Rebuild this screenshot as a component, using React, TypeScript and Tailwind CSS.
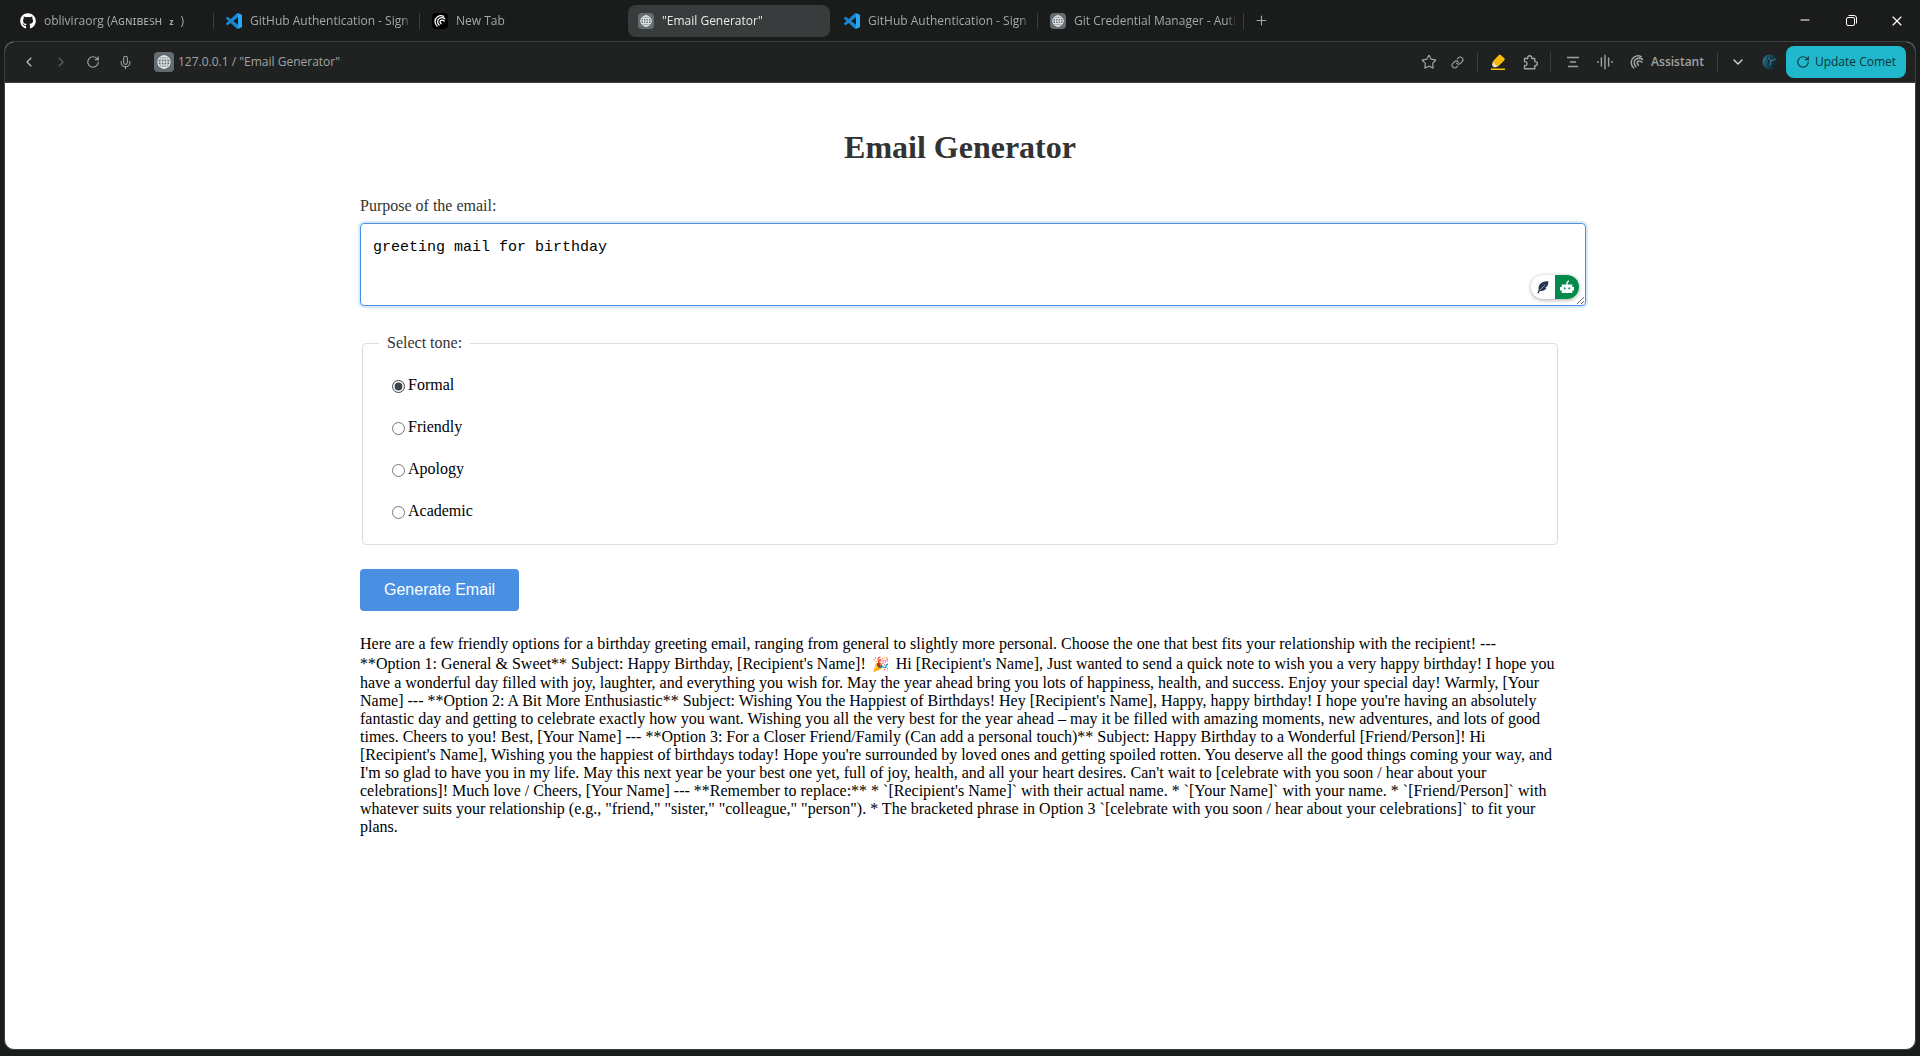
import { useState } from "react";
import type { ReactNode } from "react";
import {
  ChevronDown,
  ChevronLeft,
  ChevronRight,
  Link,
  Mic,
  Minus,
  Plus,
  RotateCw,
  Star,
  X,
} from "lucide-react";
import { FaGithub } from "react-icons/fa";

interface Tab {
  title: ReactNode;
  icon: ReactNode;
  active?: boolean;
  separator?: boolean;
}

const tones = ["Formal", "Friendly", "Apology", "Academic"];

function VsCodeIcon() {
  return (
    <svg viewBox="0 0 24 24" className="size-4">
      <path
        fill="#1787d2"
        d="M23.15 2.587L18.21.21a1.494 1.494 0 0 0-1.705.29l-9.46 8.63-4.12-3.128a.999.999 0 0 0-1.276.057L.327 7.261A1 1 0 0 0 .326 8.74L3.899 12 .326 15.26a1 1 0 0 0 .001 1.479L1.65 17.94a.999.999 0 0 0 1.276.057l4.12-3.128 9.46 8.63a1.492 1.492 0 0 0 1.704.29l4.942-2.377A1.5 1.5 0 0 0 24 20.06V3.939a1.5 1.5 0 0 0-.85-1.352zm-5.146 14.861L10.826 12l7.178-5.448v10.896z"
      />
      <path fill="#2aa7f2" d="M18.004.2l5.146 2.387A1.5 1.5 0 0 1 24 3.94v16.12a1.5 1.5 0 0 1-.85 1.35L18.004 23.8z" />
    </svg>
  );
}

function CometMark({ className }: { className: string }) {
  return (
    <svg viewBox="0 0 16 16" className={className} fill="none" stroke="currentColor" strokeLinecap="round">
      <path strokeWidth="1.7" d="M4.200 14.800C.4 11.200 .4 5.400 4.400 2.600C7 .8 10.400.6 12.800 1.800" />
      <path strokeWidth="1.7" d="M6.800 13.400C4 10.400 4 6.600 7 4.700C9.300 3.300 12.200 3.300 14.400 5" />
      <path strokeWidth="1.7" d="M9.600 11.600C7.600 9.800 7.700 7.900 9.400 7.100C10.900 6.500 12.600 6.900 13.600 8.200" />
    </svg>
  );
}

function CometIcon() {
  return (
    <span className="flex size-4 items-center justify-center rounded bg-black text-white">
      <CometMark className="size-3" />
    </span>
  );
}

function Globe({ className }: { className: string }) {
  return (
    <svg viewBox="0 0 16 16" className={className} fill="none" stroke="#e6eaea" strokeWidth="1.3">
      <circle cx="8" cy="8" r="7" />
      <ellipse cx="8" cy="8" rx="3.3" ry="7" />
      <path d="M8 1v14M1 8h14M2 4.600h12M2 11.400h12" />
    </svg>
  );
}

function GlobeIcon() {
  return (
    <span className="flex size-4 items-center justify-center rounded bg-[#626c71]">
      <Globe className="size-3" />
    </span>
  );
}

function PuzzleIcon() {
  return (
    <svg
      viewBox="0 0 16 16"
      className="size-4"
      fill="none"
      stroke="currentColor"
      strokeWidth="1.400"
      strokeLinejoin="round"
    >
      <path d="M2.500 4.500h3.200a2.100 2.100 0 1 1 4 0h3.100v3.200a2 2 0 1 1 0 3.800v3.300H2.500v-3.300a2 2 0 1 0 0-3.800z" />
    </svg>
  );
}

const tabs: Tab[] = [
  {
    title: (
      <>
        obliviraorg (Aɢɴɪʙᴇsʜ <span className="px-1 text-[8px] font-bold">z</span> )
      </>
    ),
    icon: <FaGithub className="size-4 text-white" />,
    separator: true,
  },
  { title: "GitHub Authentication - Sign in", icon: <VsCodeIcon />, separator: true },
  { title: "New Tab", icon: <CometIcon /> },
  { title: '"Email Generator"', icon: <GlobeIcon />, active: true },
  { title: "GitHub Authentication - Sign in", icon: <VsCodeIcon />, separator: true },
  { title: "Git Credential Manager - Authentication", icon: <GlobeIcon />, separator: true },
];

function TabStrip() {
  return (
    <div className="flex h-[41px] items-center pl-[10px]">
      {tabs.map((tab, index) => (
        <div key={index} className="flex items-center">
          <button
            className={`flex h-8 w-[202px] items-center gap-2 rounded-lg pr-1 pl-[10px] text-left text-xs ${
              tab.active ? "bg-[#393c3d] text-[#e8eaea]" : "text-[#a5a8a8]"
            }`}
          >
            <span className="shrink-0">{tab.icon}</span>
            <span className="min-w-0 flex-1 overflow-hidden whitespace-pre [mask-image:linear-gradient(to_right,black_93%,transparent_99%)]">
              {tab.title}
            </span>
          </button>
          <span className={`mr-[2px] ml-px h-4 w-px ${tab.separator ? "bg-[#3c3f3f]" : ""}`} />
        </div>
      ))}
      <button aria-label="New tab" className="ml-2 text-[#a5a8a8]">
        <Plus className="size-[15px]" strokeWidth={1.75} />
      </button>
      <div className="ml-auto flex text-white">
        <button aria-label="Minimize" className="flex w-[46px] justify-center">
          <Minus className="size-[14px]" strokeWidth={1.75} />
        </button>
        <button aria-label="Restore" className="flex w-[46px] items-center justify-center">
          <svg viewBox="0 0 11 11" className="size-[11px]" fill="none" stroke="currentColor">
            <rect x="0.5" y="2.5" width="8" height="8" rx="1.5" />
            <path d="M2.500.5h5.500a2.500 2.500 0 0 1 2.500 2.500v5.500" />
          </svg>
        </button>
        <button aria-label="Close" className="flex w-[46px] justify-center">
          <X className="size-4" strokeWidth={1.75} />
        </button>
      </div>
    </div>
  );
}

function ToolButton({ label, children }: { label: string; children: ReactNode }) {
  return (
    <button aria-label={label} className="flex w-8 items-center justify-center">
      {children}
    </button>
  );
}

function Divider() {
  return <span className="h-5 w-px bg-[#3c3f3f]" />;
}

function Toolbar() {
  return (
    <div className="flex h-[41px] items-center border-b border-[#3c3f3f] bg-[#202222] pr-[9px] pl-2 text-[#a0a3a3]">
      <ToolButton label="Back">
        <ChevronLeft className="size-4 text-[#c0c3c3]" strokeWidth={1.75} />
      </ToolButton>
      <ToolButton label="Forward">
        <ChevronRight className="size-4 text-[#5f6262]" strokeWidth={1.75} />
      </ToolButton>
      <ToolButton label="Reload">
        <RotateCw className="size-[14px]" strokeWidth={2} />
      </ToolButton>
      <ToolButton label="Voice">
        <Mic className="size-[15px]" strokeWidth={1.75} />
      </ToolButton>
      <span className="ml-[13px] flex size-5 items-center justify-center rounded bg-[#626c71]">
        <Globe className="size-[14px]" />
      </span>
      <span className="ml-1 text-xs">127.0.0.1 / "Email Generator"</span>

      <div className="ml-auto flex items-center">
        <button aria-label="Bookmark" className="flex w-7 justify-center">
          <Star className="size-4" strokeWidth={1.75} />
        </button>
        <button aria-label="Copy link" className="flex w-7 justify-center">
          <Link className="size-[13px]" strokeWidth={2} />
        </button>
        <span className="w-[6px]" />
        <Divider />
        <span className="w-1" />
        <ToolButton label="Highlighter">
          <svg viewBox="0 0 16 16" className="size-4">
            <path fill="#fbc30b" d="M9.200.8h1.200l4.200 3.800v1.300L8 12.400 2.800 7.400z" />
            <path stroke="#e09a00" strokeWidth="0.8" d="M5 8.500l6-6M7 10.500l6-6" />
            <path fill="#f3e3b0" d="M2.800 7.400L8 12.400l-4 1-2-1.800z" />
            <path fill="#333" d="M2 11.500l2 1.900-3 .6z" />
            <path fill="#fbc30b" d="M1 14.500h14V16H1z" />
          </svg>
        </ToolButton>
        <ToolButton label="Extensions">
          <PuzzleIcon />
        </ToolButton>
        <span className="w-1" />
        <Divider />
        <span className="w-[6px]" />
        <ToolButton label="Summarize">
          <svg viewBox="0 0 12 12" className="size-3" stroke="currentColor" strokeWidth="1.3">
            <path d="M0 1.500h12M3 6h6M1 10.500h10" />
          </svg>
        </ToolButton>
        <ToolButton label="Voice mode">
          <svg viewBox="0 0 16 16" className="size-4" stroke="currentColor" strokeWidth="1.4">
            <path d="M.9 7v2M4.400 3.500v9M8 .8v14.400M11.600 3.500v9M15.100 7v2" />
          </svg>
        </ToolButton>
        <button className="flex items-center gap-[7px] pl-[9px] text-xs font-semibold">
          <CometMark className="size-[14px]" />
          Assistant
        </button>
        <span className="w-[13px]" />
        <Divider />
        <span className="w-1" />
        <ToolButton label="More">
          <ChevronDown className="size-4 text-[#d5d8d8]" strokeWidth={2} />
        </ToolButton>
        <ToolButton label="Profile">
          <svg viewBox="0 0 16 16" className="size-4">
            <defs>
              <linearGradient id="avatar" x1="0" y1="0" x2="1" y2="0.4">
                <stop offset="0" stopColor="#2f8ca3" />
                <stop offset="0.4" stopColor="#1d5263" />
                <stop offset="1" stopColor="#10232b" />
              </linearGradient>
            </defs>
            <circle cx="8" cy="8" r="7.5" fill="url(#avatar)" />
            <path d="M5 2l4 4 5-2.500c1 1.500 1.500 3 1.400 5L10 8l-2.500 4L6 8z" fill="#16303a" />
            <path d="M6 4l3 3-1 4.500M9 7l4.500-2" stroke="#5fa9b8" strokeWidth="0.7" fill="none" />
          </svg>
        </ToolButton>
        <button className="flex h-8 w-[120px] items-center justify-center gap-[5px] rounded-lg bg-[#20b8cd] text-xs text-[#10343a]">
          <RotateCw className="size-[14px] shrink-0" strokeWidth={2} />
          <span className="whitespace-nowrap">Update Comet</span>
        </button>
      </div>
    </div>
  );
}

function WritingAssistant() {
  return (
    <div className="absolute right-[7px] bottom-[7px] flex h-6 w-12 overflow-hidden rounded-full bg-white shadow-[0_1px_4px_rgba(0,0,0,0.35)]">
      <button aria-label="Improve writing" className="flex w-6 items-center justify-center">
        <svg viewBox="0 0 12 13" className="h-[13px] w-3">
          <path
            fill="#26344f"
            d="M11.300.3C7.500.2 3.300 1.500 1.900 4.800c-.5 1.300-.5 2.600-.2 3.900L.3 12l1 .6L2.900 10c3.700.3 5.900-1.100 6.700-3.200l-1.800.1 2.500-1.600c.8-1.600 1.200-3.300 1-5z"
          />
          <path stroke="#fff" strokeWidth="0.5" fill="none" d="M2.500 9.500L8 4" />
        </svg>
      </button>
      <button aria-label="AI reply" className="flex w-6 items-center justify-center bg-[#018a4a]">
        <svg viewBox="0 0 14 14" className="size-[14px]">
          <path stroke="#fff" strokeWidth="1.3" fill="none" d="M7 5V2.500L8.800.8" />
          <path fill="#fff" d="M1.700 4.500h10.600v2.500H14v3.500h-1.700V13H1.700v-2.500H0V7h1.700z" />
          <path fill="#018a4a" d="M3.800 7.500h1.800v1.800H3.800zM8.400 7.500h1.800v1.800H8.400z" />
        </svg>
      </button>
    </div>
  );
}

function EmailGenerator() {
  const [purpose, setPurpose] = useState("greeting mail for birthday");
  const [tone, setTone] = useState("Formal");

  return (
    <main className="mx-auto w-full max-w-[1200px] pt-[46px] font-['Liberation_Serif',serif] text-base leading-[18px] text-black">
      <h1 className="mb-8 text-center text-[32px] leading-9 font-bold text-[#333]">Email Generator</h1>
      <form onSubmit={(e) => e.preventDefault()}>
        <label htmlFor="purpose" className="mb-2 block text-[#333]">
          Purpose of the email:
        </label>
        <div className="relative mr-[-26px]">
          <textarea
            id="purpose"
            rows={3}
            value={purpose}
            onChange={(e) => setPurpose(e.target.value)}
            className="block w-full resize rounded border border-[#4a90e2] px-3 pt-[14px] pb-[10px] font-['Liberation_Mono',monospace] text-[15px] leading-[19px] shadow-[0_0_0_2px_rgba(74,144,226,0.2)] outline-none"
          />
          <WritingAssistant />
        </div>

        <fieldset className="mx-[2px] mt-7 rounded border border-[#ddd] px-4 py-6">
          <legend className="px-2 text-[#333]">Select tone:</legend>
          <div className="flex flex-col gap-6 px-2">
            {tones.map((item) => (
              <label key={item} className="flex">
                <input
                  type="radio"
                  name="tone"
                  value={item}
                  checked={tone === item}
                  onChange={() => setTone(item)}
                  className="mt-1 mr-[3px] ml-[5px] size-[13px] accent-[#3b4449]"
                />
                {item}
              </label>
            ))}
          </div>
        </fieldset>

        <button
          type="submit"
          className="mt-6 rounded bg-[#4a90e2] px-6 py-3 font-['Liberation_Sans',sans-serif] text-base leading-[18px] text-white"
        >
          Generate Email
        </button>
      </form>

      <div className="mt-6">
        Here are a few friendly options for a birthday greeting email, ranging from general to slightly more personal.
        Choose the one that best fits your relationship with the recipient! --- **Option 1: General &amp; Sweet**
        Subject: Happy Birthday, [Recipient's Name]!{" "}
        <span className="mr-[3px] ml-[2px] inline-block pt-[3px] text-sm leading-[18px]">🎉</span> Hi [Recipient's
        Name], Just wanted to send a quick note to wish you a very happy birthday! I hope you have a wonderful day
        filled with joy, laughter, and everything you wish for. May the year ahead bring you lots of happiness, health,
        and success. Enjoy your special day! Warmly, [Your Name] --- **Option 2: A Bit More Enthusiastic** Subject:
        Wishing You the Happiest of Birthdays! Hey [Recipient's Name], Happy, happy birthday! I hope you're having an
        absolutely fantastic day and getting to celebrate exactly how you want. Wishing you all the very best for the
        year ahead – may it be filled with amazing moments, new adventures, and lots of good times. Cheers to you!
        Best, [Your Name] --- **Option 3: For a Closer Friend/Family (Can add a personal touch)** Subject: Happy
        Birthday to a Wonderful [Friend/Person]! Hi [Recipient's Name], Wishing you the happiest of birthdays today!
        Hope you're surrounded by loved ones and getting spoiled rotten. You deserve all the good things coming your
        way, and I'm so glad to have you in my life. May this next year be your best one yet, full of joy, health, and
        all your heart desires. Can't wait to [celebrate with you soon / hear about your celebrations]! Much love /
        Cheers, [Your Name] --- **Remember to replace:** * `[Recipient's Name]` with their actual name. * `[Your
        Name]` with your name. * `[Friend/Person]` with whatever suits your relationship (e.g., "friend," "sister,"
        "colleague," "person"). * The bracketed phrase in Option 3 `[celebrate with you soon / hear about your
        celebrations]` to fit your plans.
      </div>
    </main>
  );
}

export default function App() {
  return (
    <div className="flex min-h-screen flex-col bg-[#1a1c1b] font-['Open_Sans','Noto_Sans',sans-serif]">
      <TabStrip />
      <div className="mr-1 mb-[6px] ml-1 flex flex-1 flex-col overflow-hidden rounded-[10px] border border-[#3c3f3f] bg-white">
        <Toolbar />
        <EmailGenerator />
      </div>
    </div>
  );
}
